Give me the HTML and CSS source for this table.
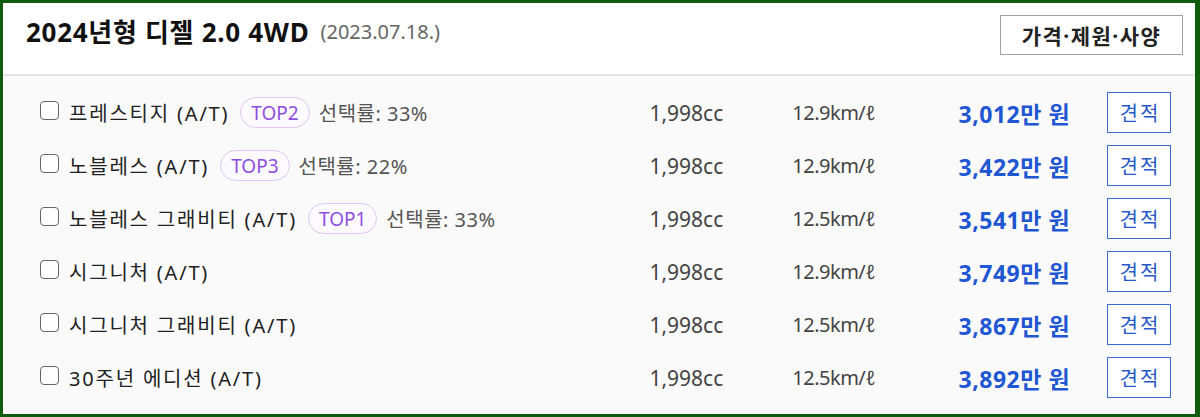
FILE: index.html
```html
<!DOCTYPE html>
<html lang="ko">
<head>
<meta charset="utf-8">
<link rel="stylesheet" href="styles.css">
</head>
<body>
<div class="card">
  <div class="head">
    <div class="title"><span class="model">2024년형 디젤 2.0 4WD</span><span class="date">(2023.07.18.)</span></div>
    <button class="spec">가격·제원·사양</button>
  </div>
  <div class="list">
    <div class="row">
      <div class="name"><span class="box"></span><span class="trim">프레스티지 (A/T)</span><span class="badge">TOP2</span><span class="rate">선택률: 33%</span></div>
      <div class="cc">1,998cc</div><div class="eff">12.9km/ℓ</div><div class="price">3,012만 원</div><button class="quote">견적</button>
    </div>
    <div class="row">
      <div class="name"><span class="box"></span><span class="trim">노블레스 (A/T)</span><span class="badge">TOP3</span><span class="rate">선택률: 22%</span></div>
      <div class="cc">1,998cc</div><div class="eff">12.9km/ℓ</div><div class="price">3,422만 원</div><button class="quote">견적</button>
    </div>
    <div class="row">
      <div class="name"><span class="box"></span><span class="trim">노블레스 그래비티 (A/T)</span><span class="badge">TOP1</span><span class="rate">선택률: 33%</span></div>
      <div class="cc">1,998cc</div><div class="eff">12.5km/ℓ</div><div class="price">3,541만 원</div><button class="quote">견적</button>
    </div>
    <div class="row">
      <div class="name"><span class="box"></span><span class="trim">시그니처 (A/T)</span></div>
      <div class="cc">1,998cc</div><div class="eff">12.9km/ℓ</div><div class="price">3,749만 원</div><button class="quote">견적</button>
    </div>
    <div class="row">
      <div class="name"><span class="box"></span><span class="trim">시그니처 그래비티 (A/T)</span></div>
      <div class="cc">1,998cc</div><div class="eff">12.5km/ℓ</div><div class="price">3,867만 원</div><button class="quote">견적</button>
    </div>
    <div class="row">
      <div class="name"><span class="box"></span><span class="trim">30주년 에디션 (A/T)</span></div>
      <div class="cc">1,998cc</div><div class="eff">12.5km/ℓ</div><div class="price">3,892만 원</div><button class="quote">견적</button>
    </div>
  </div>
</div>
</body>
</html>
```
FILE: styles.css
```css
* { box-sizing: border-box; }
html, body { margin: 0; padding: 0; }
body {
  background: #0f5c0f;
  width: 1200px;
  height: 417px;
  padding: 3px 5px 3px 3px;
  font-family: "Noto Sans", "Noto Sans CJK KR", sans-serif;
  color: #222;
}
.card {
  background: #fafafa;
  height: 411px;
  display: flex;
  flex-direction: column;
}
.head {
  background: #fff;
  height: 73px;
  border-bottom: 2px solid #e4e4e4;
  display: flex;
  justify-content: space-between;
  align-items: flex-start;
  padding: 12px 12px 0 23px;
}
.title {
  height: 32px;
  display: flex;
  align-items: center;
  gap: 11px;
}
.model { font-size: 26px; font-weight: 700; color: #111; letter-spacing: 0.7px; }
.date { font-size: 20px; color: #666; }
.spec {
  width: 183px;
  height: 40px;
  background: #fff;
  border: 1px solid #a0a0a0;
  font-family: inherit;
  font-size: 21px;
  font-weight: 700;
  letter-spacing: 1.5px;
  color: #222;
  padding: 0;
}
.list { padding: 10px 24px 10px 37px; }
.row {
  height: 53px;
  display: flex;
  align-items: center;
}
.name {
  width: 610px;
  display: flex;
  align-items: center;
}
.box {
  width: 19px;
  height: 19px;
  border: 1.5px solid #666;
  border-radius: 4px;
  background: #fff;
  margin-right: 10px;
  margin-top: -4px;
}
.trim { color: #222; font-size: 20px; letter-spacing: 1.8px; }
.badge {
  margin-left: 11px;
  height: 31px;
  padding: 0 10px;
  border: 1px solid #dcc8f3;
  background: #fcf9ff;
  border-radius: 16px;
  color: #8e4fe0;
  font-size: 19px;
  display: flex;
  align-items: center;
}
.rate { margin-left: 9px; color: #555; font-size: 20px; letter-spacing: 0.5px; }
.cc { width: 143px; font-size: 21px; color: #444; }
.eff { width: 150px; font-size: 20px; color: #444; letter-spacing: -0.5px; }
.price {
  width: 128px;
  text-align: right;
  font-size: 23px;
  font-weight: 700;
  letter-spacing: 0.5px;
  color: #1f56d2;
}
.quote {
  margin-left: 37px;
  width: 64px;
  height: 41px;
  background: #fff;
  border: 1px solid #3a6bd4;
  color: #2858c8;
  font-family: inherit;
  font-size: 20px;
  letter-spacing: 2px;
  padding: 0 0 0 2px;
}
```
